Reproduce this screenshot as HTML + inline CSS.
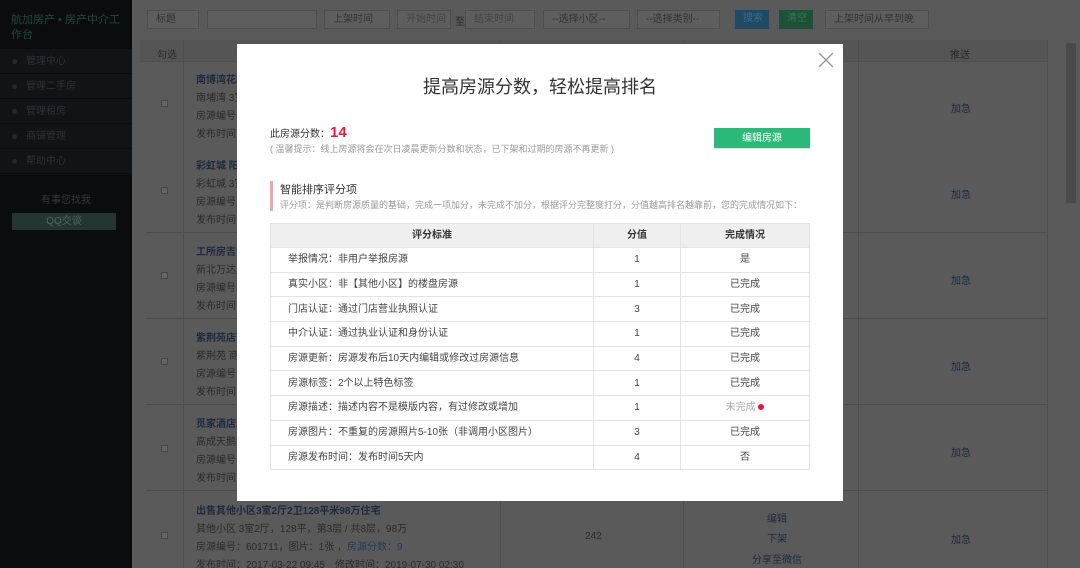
<!DOCTYPE html>
<html><head><meta charset="utf-8"><style>
*{margin:0;padding:0;box-sizing:border-box}
html,body{width:1080px;height:568px;overflow:hidden}
body{position:relative;background:#5a5a5a;font-family:"Liberation Sans","Noto Sans CJK SC",sans-serif;font-size:10px;color:#222}
.side{position:absolute;left:0;top:0;width:132px;height:568px;background:#0a0c0e}
.side .logo{position:absolute;left:11px;top:13px;color:#1e4a40;font-size:11px;line-height:15px;width:110px}
.side .menu{position:absolute;top:49px;left:0;width:132px;height:126px;background:#111417}
.side .menu div{height:25px;border-bottom:1px solid #0a0c0e;color:#2c3136;font-size:10px;line-height:25px;padding-left:26px;position:relative}
.side .menu div:before{content:"";position:absolute;left:12px;top:10px;width:5px;height:5px;border-radius:50%;background:#24282c}
.side .help{position:absolute;top:191px;width:132px;text-align:center;color:#34383c;font-size:10px}
.side .qq{position:absolute;left:12px;top:213px;width:104px;height:17px;background:#233632;color:#56665f;text-align:center;line-height:17px;font-size:10px}
.bar .b{position:absolute;top:10px;height:19px;border:1px solid #4e4e4e;background:#5e5e5e;color:#333;font-size:10px;line-height:17px;padding-left:8px}
.tbl{position:absolute;left:140px;top:40px;width:907px;height:528px}
.hdr{position:absolute;left:0;top:0;width:907px;height:22px;background:#555;border-bottom:1px solid #4d4d4d}
.row{position:absolute;left:6px;width:901px;height:86px;border-bottom:1px solid #4c4c4c;background:#5a5a5a}
.vl{position:absolute;top:0;width:1px;height:528px;background:#4e4e4e}
.t{position:absolute;font-size:10px;color:#2a2a2a;white-space:nowrap}
.lnk{color:#1c2a40}
.cb{position:absolute;width:7px;height:7px;border:1px solid #454545;background:#666;border-radius:1px}
.modal{position:absolute;left:237px;top:44px;width:606px;height:457px;background:#fff}
.m{position:absolute;white-space:nowrap}
table{border-collapse:collapse;position:absolute;left:33px;top:179px;width:540px;font-size:10px;color:#444}
td,th{border:1px solid #e3e3e3;height:24.7px;padding:0;line-height:23px;vertical-align:middle}
th{background:#efefef;font-weight:bold;color:#333;height:24px}
td.c{text-align:center}
td.l{padding-left:17px}
</style></head><body>
<div class="side">
 <div class="logo">航加房产 • 房产中介工作台</div>
 <div class="menu"><div>管理中心</div><div>管理二手房</div><div>管理租房</div><div>商铺管理</div><div>帮助中心</div></div>
 <div class="help">有事您找我</div>
 <div class="qq">QQ交谈</div>
</div>
<div class="bar">
 <div class="b" style="left:147px;width:52px">标题</div>
 <div class="b" style="left:207px;width:110px"></div>
 <div class="b" style="left:324px;width:66px">上架时间</div>
 <div class="b" style="left:397px;width:54px;color:#444">开始时间</div>
 <div class="t" style="left:455px;top:13px">至</div>
 <div class="b" style="left:465px;width:70px;color:#444">结束时间</div>
 <div class="b" style="left:543px;width:87px">--选择小区--</div>
 <div class="b" style="left:637px;width:83px">--选择类别--</div>
 <div class="b" style="left:735px;width:34px;background:#1f4a66;color:#3f6a85;border:none">搜索</div>
 <div class="b" style="left:779px;width:34px;background:#1d5238;color:#3c7256;border:none">清空</div>
 <div class="b" style="left:825px;width:104px">上架时间从早到晚</div>
</div>
<div class="tbl">
 <div class="hdr"></div>
 <div class="t" style="left:17px;top:6px">勾选</div>
 <div class="t" style="left:810px;top:6px">推送</div>
 <div class="row" style="top:22px"></div><div class="row" style="top:107px"></div><div class="row" style="top:193px"></div><div class="row" style="top:279px"></div><div class="row" style="top:365px"></div><div class="row" style="top:452px"></div>
 <div class="vl" style="left:43px"></div><div class="vl" style="left:360px"></div><div class="vl" style="left:543px"></div><div class="vl" style="left:718px"></div><div class="vl" style="left:907px"></div>
</div>
<div class="t lnk" style="left:196px;top:71px;font-weight:bold">南博湾花园</div><div class="t" style="left:196px;top:89px">南埔湾 3室</div><div class="t" style="left:196px;top:107px">房源编号：</div><div class="t" style="left:196px;top:125px">发布时间：</div>
<div class="t lnk" style="left:196px;top:157px;font-weight:bold">彩虹城 阳光</div><div class="t" style="left:196px;top:175px">彩虹城 3室</div><div class="t" style="left:196px;top:193px">房源编号：</div><div class="t" style="left:196px;top:211px">发布时间：</div>
<div class="t lnk" style="left:196px;top:243px;font-weight:bold">工所房吉包</div><div class="t" style="left:196px;top:261px">新北万达广</div><div class="t" style="left:196px;top:279px">房源编号：</div><div class="t" style="left:196px;top:297px">发布时间：</div>
<div class="t lnk" style="left:196px;top:329px;font-weight:bold">紫荆苑店面</div><div class="t" style="left:196px;top:347px">紫荆苑 商铺</div><div class="t" style="left:196px;top:365px">房源编号：</div><div class="t" style="left:196px;top:383px">发布时间：</div>
<div class="t lnk" style="left:196px;top:415px;font-weight:bold">觅家酒店运</div><div class="t" style="left:196px;top:433px">高成天鹅湖</div><div class="t" style="left:196px;top:451px">房源编号：</div><div class="t" style="left:196px;top:469px">发布时间：</div>
<div class="t lnk" style="left:196px;top:502px;font-weight:bold">出售其他小区3室2厅2卫128平米98万住宅</div>
<div class="t" style="left:196px;top:520px">其他小区 3室2厅，128平，第3层 / 共8层，98万</div>
<div class="t" style="left:196px;top:538px">房源编号：601711，图片：1张 ，<span style="color:#1d3d5c">房源分数：9</span></div>
<div class="t" style="left:196px;top:556px">发布时间：2017-03-22 09:45　修改时间：2019-07-30 02:30</div>
<div class="cb" style="left:161px;top:100px"></div><div class="cb" style="left:161px;top:187px"></div><div class="cb" style="left:161px;top:272px"></div><div class="cb" style="left:161px;top:358px"></div><div class="cb" style="left:161px;top:445px"></div><div class="cb" style="left:161px;top:532px"></div>
<div class="t lnk" style="left:951px;top:100px">加急</div><div class="t lnk" style="left:951px;top:186px">加急</div><div class="t lnk" style="left:951px;top:272px">加急</div><div class="t lnk" style="left:951px;top:358px">加急</div><div class="t lnk" style="left:951px;top:444px">加急</div><div class="t lnk" style="left:951px;top:531px">加急</div>
<div class="t" style="left:585px;top:531px">242</div>
<div class="t lnk" style="left:767px;top:510px">编辑</div><div class="t lnk" style="left:767px;top:530px">下架</div><div class="t lnk" style="left:752px;top:551px">分享至微信</div>
<div style="position:absolute;left:1066px;top:43px;width:10px;height:160px;background:#4a4a4a"></div>
<div class="modal">
 <svg class="m" style="left:581px;top:8px" width="16" height="16" viewBox="0 0 16 16"><path d="M1 1L15 15M15 1L1 15" stroke="#999" stroke-width="1.4"/></svg>
 <div class="m" style="left:0;width:606px;text-align:center;top:29px;font-size:18px;color:#333">提高房源分数，轻松提高排名</div>
 <div class="m" style="left:33px;top:80px;font-size:10px;color:#333">此房源分数：<span style="color:#e8163a;font-size:15px;font-weight:bold">14</span></div>
 <div class="m" style="left:33px;top:98px;font-size:9px;color:#999">( 温馨提示：线上房源将会在次日凌晨更新分数和状态，已下架和过期的房源不再更新 )</div>
 <div class="m" style="left:477px;top:84px;width:96px;height:21px;background:#2bb97a;border-bottom:1px solid #c8f0dd;color:#fff;font-size:10px;text-align:center;line-height:21px">编辑房源</div>
 <div class="m" style="left:33px;top:137px;width:3px;height:30px;background:#e9a8b2"></div>
 <div class="m" style="left:43px;top:137px;font-size:11px;color:#333">智能排序评分项</div>
 <div class="m" style="left:43px;top:154px;font-size:9px;color:#999">评分项：是判断房源质量的基础，完成一项加分，未完成不加分，根据评分完整度打分，分值越高排名越靠前，您的完成情况如下：</div>
 <table>
 <tr><th style="width:323px">评分标准</th><th style="width:87px">分值</th><th>完成情况</th></tr>
 <tr><td class="l">举报情况：非用户举报房源</td><td class="c">1</td><td class="c">是</td></tr>
 <tr><td class="l">真实小区：非【其他小区】的楼盘房源</td><td class="c">1</td><td class="c">已完成</td></tr>
 <tr><td class="l">门店认证：通过门店营业执照认证</td><td class="c">3</td><td class="c">已完成</td></tr>
 <tr><td class="l">中介认证：通过执业认证和身份认证</td><td class="c">1</td><td class="c">已完成</td></tr>
 <tr><td class="l">房源更新：房源发布后10天内编辑或修改过房源信息</td><td class="c">4</td><td class="c">已完成</td></tr>
 <tr><td class="l">房源标签：2个以上特色标签</td><td class="c">1</td><td class="c">已完成</td></tr>
 <tr><td class="l">房源描述：描述内容不是模版内容，有过修改或增加</td><td class="c">1</td><td class="c" style="color:#aaa">未完成 <span style="display:inline-block;width:6px;height:6px;border-radius:50%;background:#e8163a"></span></td></tr>
 <tr><td class="l">房源图片：不重复的房源照片5-10张（非调用小区图片）</td><td class="c">3</td><td class="c">已完成</td></tr>
 <tr><td class="l">房源发布时间：发布时间5天内</td><td class="c">4</td><td class="c">否</td></tr>
 </table>
</div>
</body></html>
